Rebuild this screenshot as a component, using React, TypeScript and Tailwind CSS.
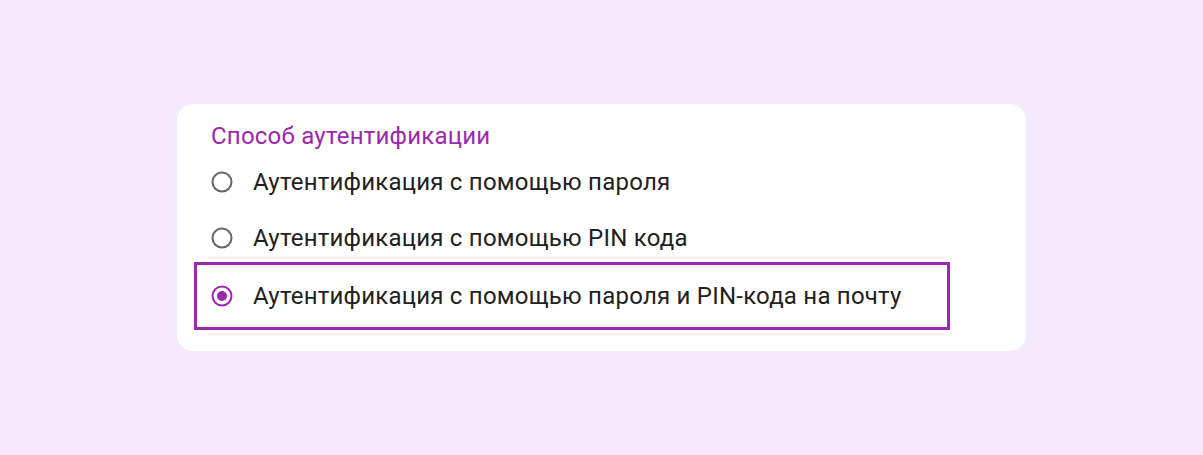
import React from "react";

function RadioIcon({ checked }: { checked?: boolean }) {
  const color = checked ? "#9c27b0" : "#666666";
  return (
    <svg width="24" height="24" viewBox="0 0 24 24" className="shrink-0">
      <circle cx="12" cy="12" r="9.5" fill="none" stroke={color} strokeWidth="2" />
      {checked && <circle cx="12" cy="12" r="5" fill={color} />}
    </svg>
  );
}

export default function App() {
  const font = { fontFamily: "Roboto, 'Noto Sans', sans-serif" };
  return (
    <div className="w-full h-[455px] bg-[#f5eafd] flex items-center justify-center" style={font}>
      <div className="w-[849px] h-[247px] bg-white rounded-[16px] flex flex-col pt-[12px] tracking-[0.225px]">
        <div className="pl-[34px] h-[40px] flex items-center text-[24px] text-[#9c27b0]">
          Способ аутентификации
        </div>
        <div className="mt-[2px] h-[48px] pl-[33px] flex items-center gap-[19px] text-[24px] text-[#212121]">
          <RadioIcon />
          <span>Аутентификация с помощью пароля</span>
        </div>
        <div className="mt-[8px] h-[48px] pl-[33px] flex items-center gap-[19px] text-[24px] text-[#212121]">
          <RadioIcon />
          <span>Аутентификация с помощью PIN кода</span>
        </div>
        <div className="ml-[17px] w-[756px] h-[68px] border-[3px] border-[#9c27b0] pl-[13px] flex items-center gap-[19px] text-[24px] text-[#212121]">
          <RadioIcon checked />
          <span>Аутентификация с помощью пароля и PIN-кода на почту</span>
        </div>
      </div>
    </div>
  );
}
